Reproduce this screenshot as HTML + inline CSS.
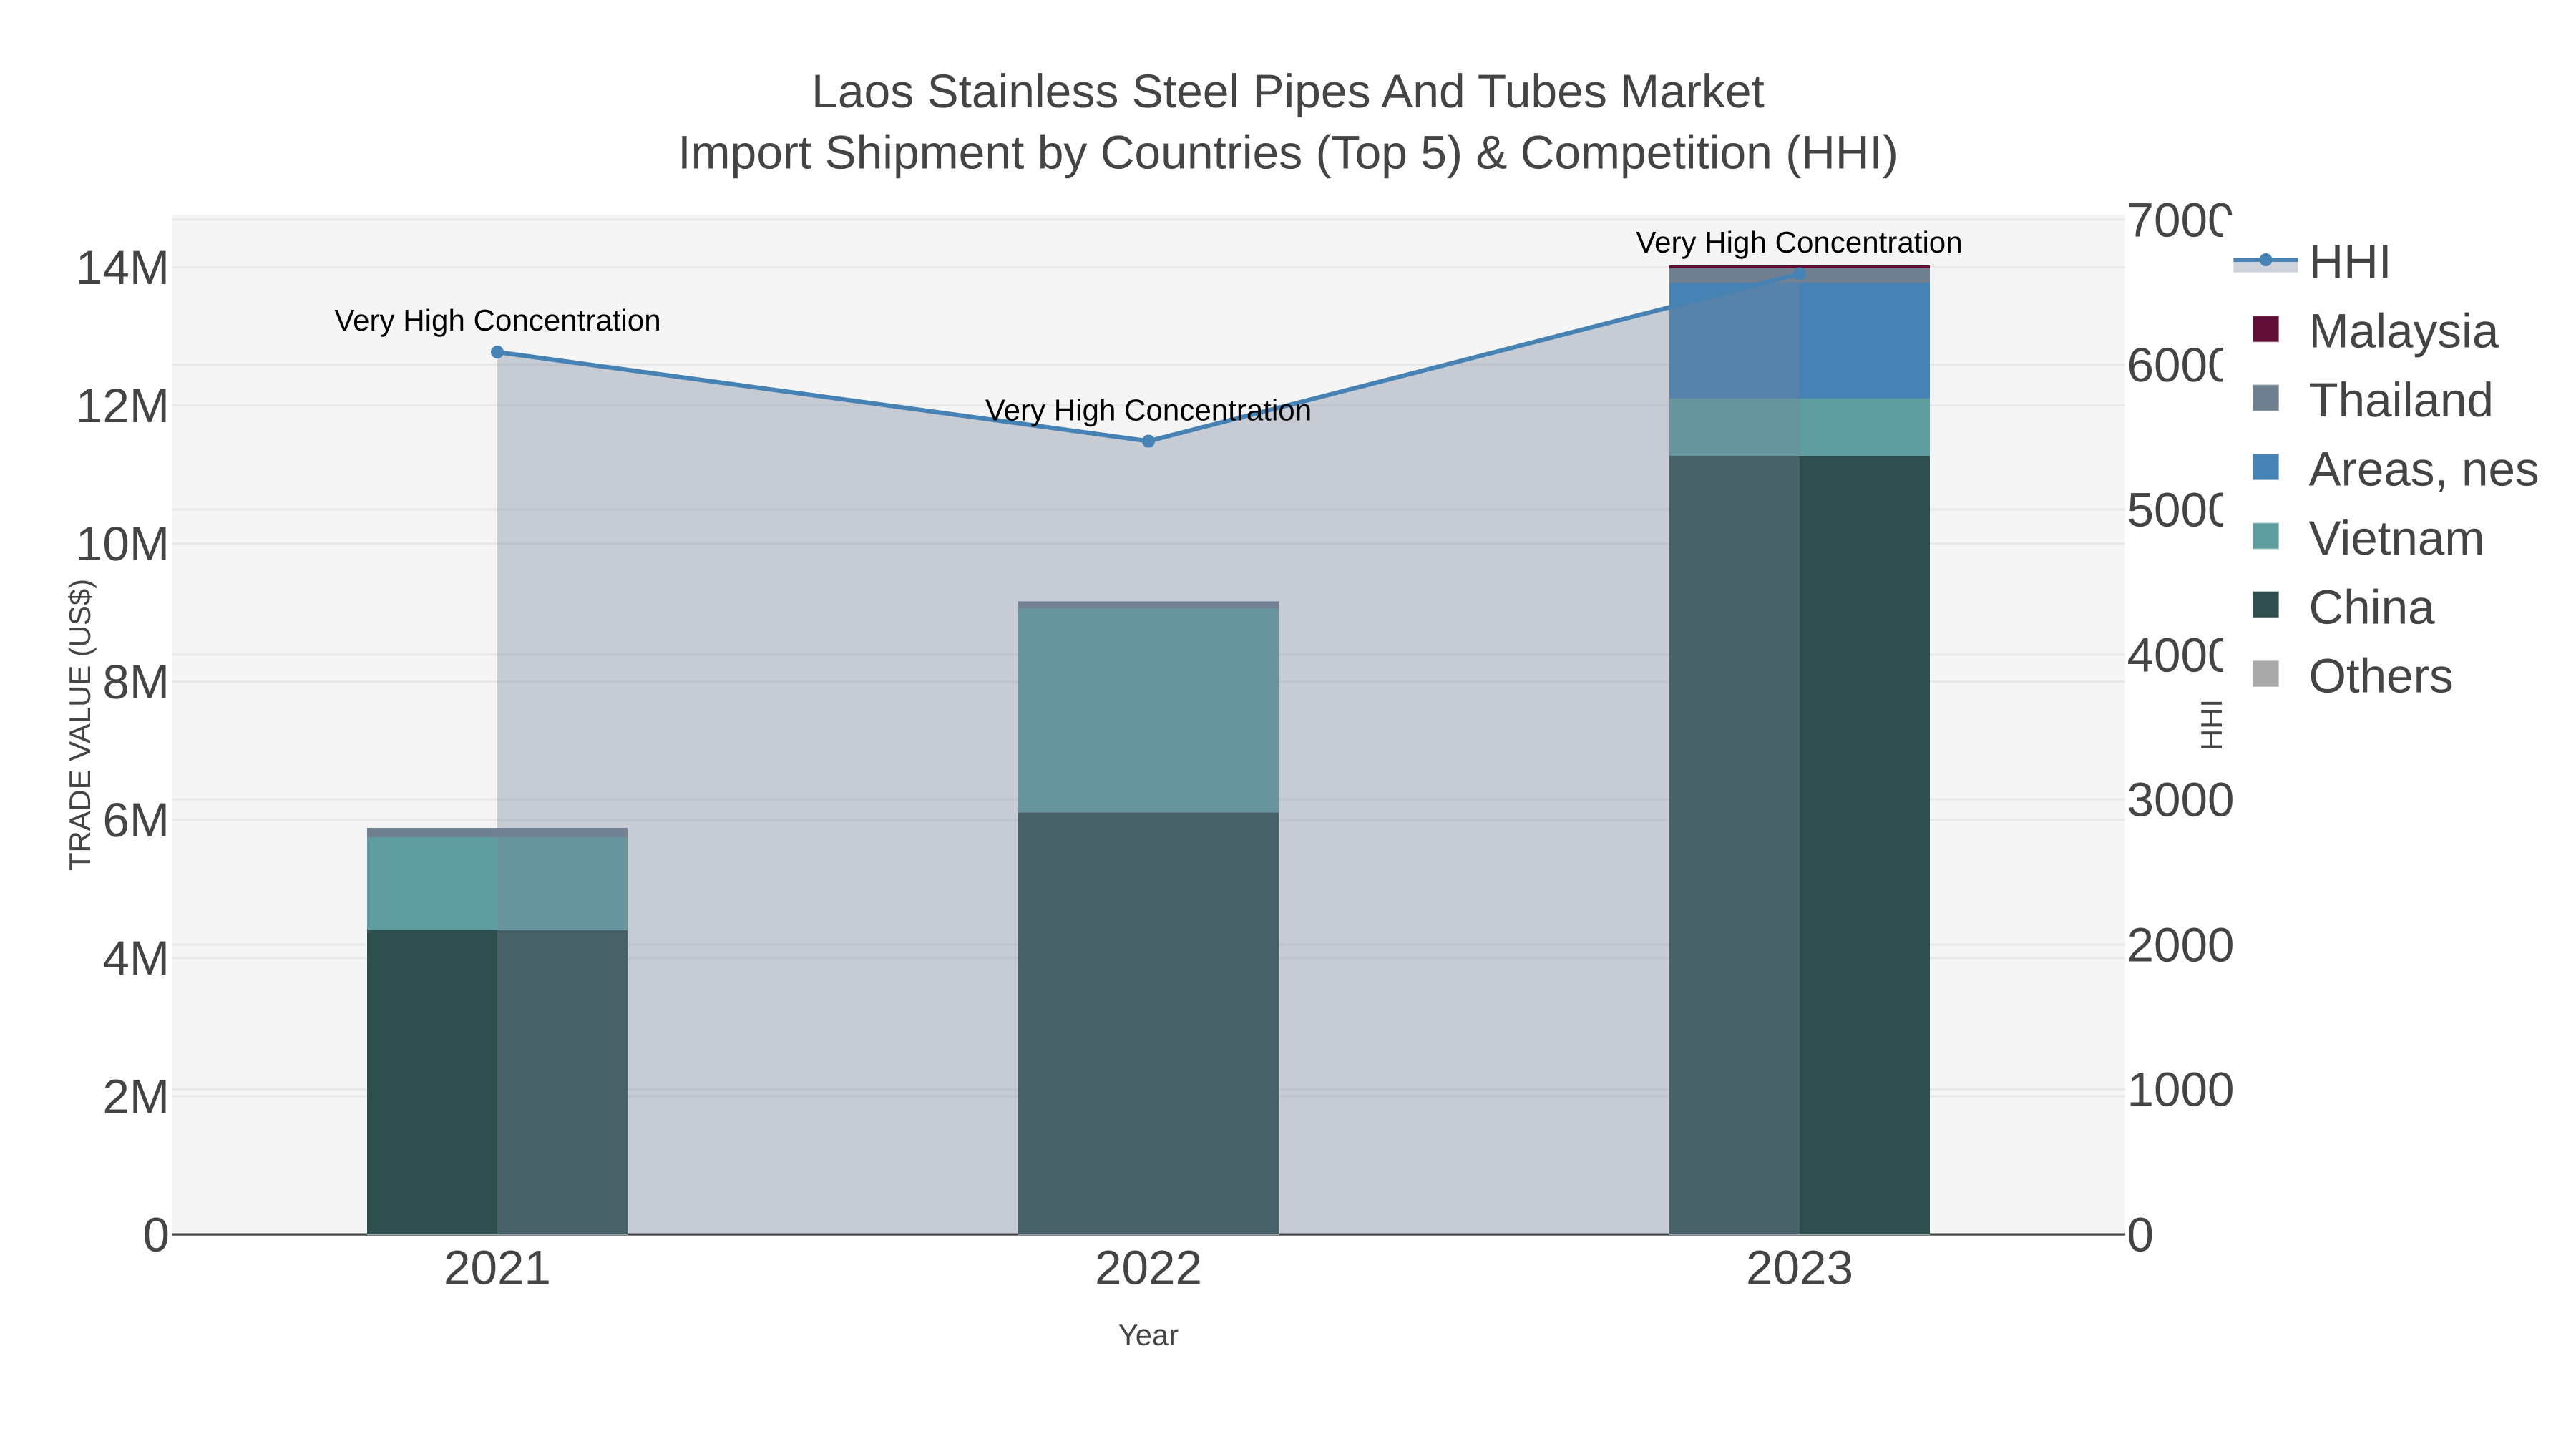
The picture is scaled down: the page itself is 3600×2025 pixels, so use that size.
<!DOCTYPE html>
<html>
<head>
<meta charset="utf-8">
<title>Laos Stainless Steel Pipes And Tubes Market</title>
<style>
html,body{margin:0;padding:0;background:#fff;}
svg{display:block;}
text{font-family:"Liberation Sans",Arial,sans-serif;fill:#444;text-rendering:geometricPrecision;}
.t{font-size:67.4px;}
.s{font-size:41.8px;}
.a{font-size:42.1px;fill:#000;text-anchor:middle;}
</style>
</head>
<body>
<svg xmlns="http://www.w3.org/2000/svg" width="3600" height="2025" viewBox="0 0 3600 2025">
<rect width="3600" height="2025" fill="#fff"/>
<!-- plot bg -->
<rect x="240" y="300" width="2730" height="1425" fill="#f5f5f5"/>
<!-- grid -->
<g stroke="#e8e8e8" stroke-width="3">
<path d="M240 373.5H2970M240 566.5H2970M240 759.6H2970M240 952.7H2970M240 1145.8H2970M240 1338.9H2970M240 1532H2970"/>
<path d="M240 307H2970M240 509.6H2970M240 712H2970M240 915H2970M240 1117H2970M240 1320H2970M240 1522.4H2970"/>
</g>
<!-- axis -->
<rect x="240" y="1723.5" width="2730" height="3.2" fill="#444"/>
<!-- bars 2021 -->
<rect x="513" y="1300" width="364" height="425" fill="#2f4f4f"/>
<rect x="513" y="1170" width="364" height="130" fill="#5f9ea0"/>
<rect x="513" y="1157" width="364" height="13" fill="#708090"/>
<!-- bars 2022 -->
<rect x="1423" y="1135.3" width="364" height="589.7" fill="#2f4f4f"/>
<rect x="1423" y="850" width="364" height="285.3" fill="#5f9ea0"/>
<rect x="1423" y="840.5" width="364" height="9.5" fill="#708090"/>
<!-- bars 2023 -->
<rect x="2333" y="637" width="364" height="1088" fill="#2f4f4f"/>
<rect x="2333" y="557" width="364" height="80" fill="#5f9ea0"/>
<rect x="2333" y="395" width="364" height="162" fill="#4682b4"/>
<rect x="2333" y="375" width="364" height="20" fill="#708090"/>
<rect x="2333" y="371" width="364" height="4" fill="#5f0f35"/>
<!-- bar bottom edge -->
<g fill="#a0a4a6">
<rect x="513" y="1725" width="364" height="1"/>
<rect x="1423" y="1725" width="364" height="1"/>
<rect x="2333" y="1725" width="364" height="1"/>
</g>
<!-- HHI area -->
<path d="M695 492L1605 616.5L2515 382.7V1725H695Z" fill="#788398" fill-opacity="0.36"/>
<!-- HHI line -->
<path d="M695 492L1605 616.5L2515 382.7" fill="none" stroke="#4682b4" stroke-width="6.2"/>
<circle cx="695" cy="492" r="9" fill="#4682b4"/>
<circle cx="1605" cy="616.5" r="9" fill="#4682b4"/>
<circle cx="2515" cy="382.7" r="9" fill="#4682b4"/>
<!-- annotations -->
<text class="a" x="695.5" y="462">Very High Concentration</text>
<text class="a" x="1605" y="587.5">Very High Concentration</text>
<text class="a" x="2514.5" y="353">Very High Concentration</text>
<!-- title -->
<text x="1800" y="150" text-anchor="middle" style="font-size:66px">Laos Stainless Steel Pipes And Tubes Market</text>
<text x="1800" y="235.5" text-anchor="middle" style="font-size:66px">Import Shipment by Countries (Top 5) &amp; Competition (HHI)</text>
<!-- left ticks -->
<g text-anchor="end">
<text class="t" x="237" y="396.8">14M</text>
<text class="t" x="237" y="589.8">12M</text>
<text class="t" x="237" y="782.9">10M</text>
<text class="t" x="237" y="976">8M</text>
<text class="t" x="237" y="1169.1">6M</text>
<text class="t" x="237" y="1362.2">4M</text>
<text class="t" x="237" y="1555.3">2M</text>
<text class="t" x="237" y="1748.3">0</text>
</g>
<!-- right ticks -->
<g>
<text class="t" x="2972.5" y="330.3">7000</text>
<text class="t" x="2972.5" y="532.9">6000</text>
<text class="t" x="2972.5" y="735.3">5000</text>
<text class="t" x="2972.5" y="938.3">4000</text>
<text class="t" x="2972.5" y="1140.3">3000</text>
<text class="t" x="2972.5" y="1343.3">2000</text>
<text class="t" x="2972.5" y="1545.7">1000</text>
<text class="t" x="2972.5" y="1748.3">0</text>
</g>
<!-- x ticks -->
<text class="t" x="695" y="1794.6" text-anchor="middle">2021</text>
<text class="t" x="1605" y="1794.6" text-anchor="middle">2022</text>
<text class="t" x="2515" y="1794.6" text-anchor="middle">2023</text>
<!-- axis titles -->
<text class="s" x="1605" y="1880" text-anchor="middle">Year</text>
<text class="s" transform="translate(126 1013) rotate(-90)" text-anchor="middle">TRADE VALUE (US$)</text>
<text class="s" transform="translate(3105 1013) rotate(-90)" text-anchor="middle">HHI</text>
<!-- legend -->
<rect x="3107" y="301" width="493" height="695" fill="#fff"/>
<rect x="3121.3" y="363" width="90" height="17.7" fill="#788398" fill-opacity="0.36"/>
<rect x="3121.3" y="360" width="90" height="6" fill="#4682b4"/>
<circle cx="3166.5" cy="363" r="9" fill="#4682b4"/>
<g stroke-width="1">
<rect x="3148.5" y="441.7" width="36" height="36" fill="#5f0f35" stroke="#a0708a"/>
<rect x="3148.5" y="538" width="36" height="36" fill="#708090" stroke="#a0acb8"/>
<rect x="3148.5" y="634.5" width="36" height="36" fill="#4682b4" stroke="#90b4d2"/>
<rect x="3148.5" y="731" width="36" height="36" fill="#5f9ea0" stroke="#9cc4c6"/>
<rect x="3148.5" y="827" width="36" height="36" fill="#2f4f4f" stroke="#7f9595"/>
<rect x="3148.5" y="923.5" width="36" height="36" fill="#a9a9a9" stroke="#cbcbcb"/>
</g>
<text class="t" x="3226.5" y="388.5">HHI</text>
<text class="t" x="3226.5" y="485.7">Malaysia</text>
<text class="t" x="3226.5" y="582">Thailand</text>
<text class="t" x="3226.5" y="678.5">Areas, nes</text>
<text class="t" x="3226.5" y="774.9">Vietnam</text>
<text class="t" x="3226.5" y="871.3">China</text>
<text class="t" x="3226.5" y="967.7">Others</text>
</svg>
</body>
</html>
